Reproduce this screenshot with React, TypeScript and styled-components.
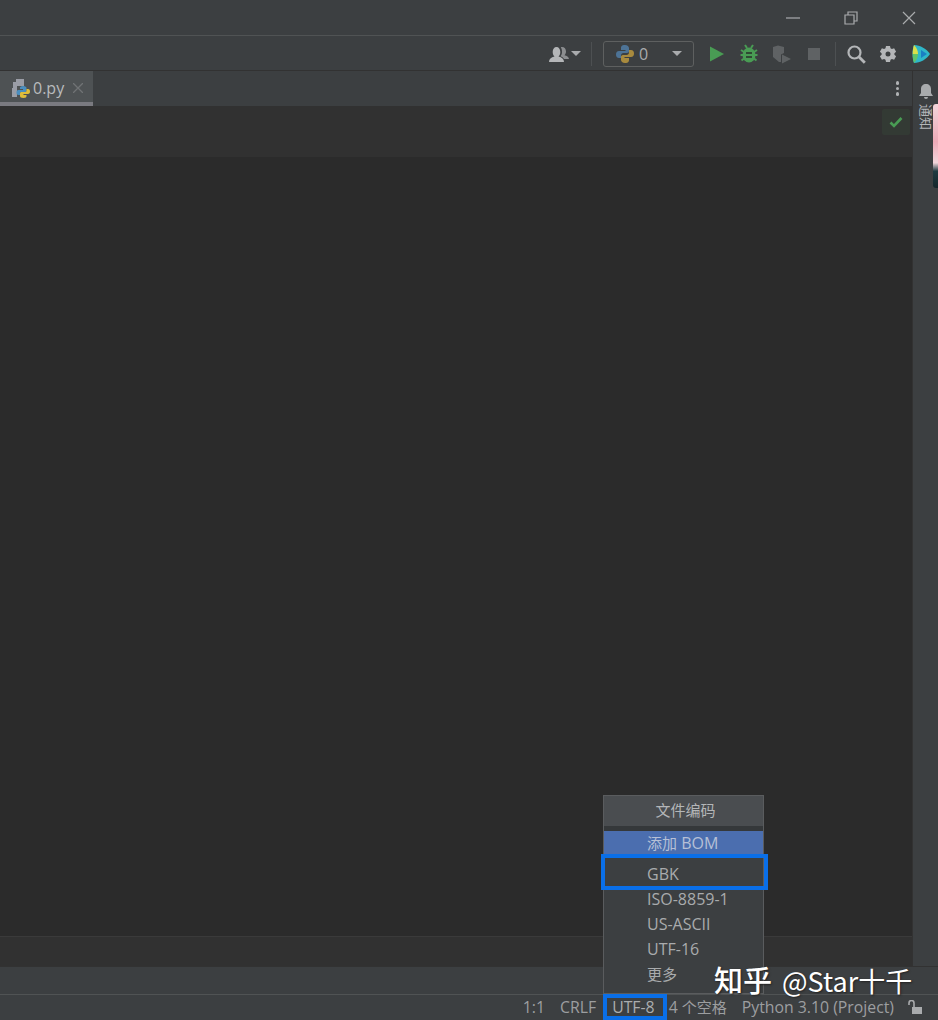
import React from 'react'
import styled, { createGlobalStyle } from 'styled-components'

const GlobalStyle = createGlobalStyle`
  html, body {
    margin: 0;
    padding: 0;
    background: #3c3f41;
  }
`

const Page = styled.div`
  position: relative;
  width: 938px;
  height: 1020px;
  overflow: hidden;
  display: flex;
  flex-direction: column;
  background: #3c3f41;
  color: #afb1b3;
  font-family: 'Open Sans', 'Noto Sans', 'Noto Sans CJK SC', sans-serif;
`

const TitleBar = styled.div`
  height: 36px;
  flex: none;
  display: flex;
  justify-content: flex-end;
  align-items: center;
  padding-right: 22px;
  gap: 44px;
  border-bottom: 1px solid #505354;
  box-sizing: border-box;
`

const WindowIcon = styled.svg`
  width: 14px;
  height: 14px;
  display: block;
  fill: none;
  stroke: #a9abad;
  stroke-width: 1.2;
`

const Toolbar = styled.div`
  height: 35px;
  flex: none;
  display: flex;
  justify-content: flex-end;
  align-items: center;
  padding: 1px 7px 0 0;
  border-bottom: 1px solid #323232;
  box-sizing: border-box;
`

const Divider = styled.div<{ $left: number; $right: number }>`
  width: 1px;
  height: 24px;
  background: #4d5052;
  margin: 0 ${({ $right }) => $right}px 0 ${({ $left }) => $left}px;
`

const ToolIcon = styled.svg<{ $ml?: number }>`
  width: 20px;
  height: 20px;
  display: block;
  margin-left: ${({ $ml }) => $ml ?? 0}px;
  flex: none;
`

const RunSelect = styled.div`
  width: 91px;
  height: 26px;
  border: 1px solid #5e6060;
  border-radius: 3px;
  box-sizing: border-box;
  display: flex;
  align-items: center;
  padding: 0 11px;
  margin-right: 13px;
  font-size: 16px;
  color: #a9abad;
`

const Zero = styled.span`
  margin-left: 4px;
  flex: 1;
`

const Caret = styled.span<{ $w: number; $ml?: number }>`
  width: 0;
  height: 0;
  margin-left: ${({ $ml }) => $ml ?? 0}px;
  border-left: ${({ $w }) => $w}px solid transparent;
  border-right: ${({ $w }) => $w}px solid transparent;
  border-top: ${({ $w }) => $w}px solid #a9abad;
`

const Main = styled.div`
  flex: 1;
  display: flex;
  min-height: 0;
`

const Center = styled.div`
  flex: 1;
  display: flex;
  flex-direction: column;
  min-width: 0;
  border-right: 1px solid #323232;
`

const RightBar = styled.div`
  width: 25px;
  flex: none;
  display: flex;
  flex-direction: column;
  align-items: flex-start;
  padding: 13px 0 0 6px;
  box-sizing: border-box;
  gap: 5px;
  background: #3c3f41;
`

const VerticalLabel = styled.span`
  writing-mode: vertical-rl;
  text-orientation: sideways;
  font-size: 13px;
  line-height: 14px;
  color: #b4b6b8;
  font-family: 'Noto Sans CJK SC', sans-serif;
`

const TabStrip = styled.div`
  height: 35px;
  flex: none;
  display: flex;
  justify-content: space-between;
  align-items: center;
  padding-right: 13px;
  background: #3c3f41;
  box-sizing: border-box;
`

const Tab = styled.div`
  width: 93px;
  height: 35px;
  box-sizing: border-box;
  background: #4e5254;
  border-bottom: 4px solid #7a7a80;
  display: flex;
  align-items: center;
  padding: 3px 0 0 11px;
  font-size: 16px;
  color: #b9bbbd;
`

const TabName = styled.span`
  margin-left: 2px;
`

const CloseMark = styled.svg`
  width: 10px;
  height: 10px;
  margin-left: 9px;
  stroke: #707375;
  stroke-width: 1.3;
`

const Dots = styled.div`
  display: flex;
  flex-direction: column;
  gap: 2px;
`

const Dot = styled.span`
  width: 3.5px;
  height: 3.5px;
  border-radius: 50%;
  background: #b0b2b4;
`

const EditorTop = styled.div`
  height: 51px;
  flex: none;
  background: #313131;
  display: flex;
  justify-content: flex-end;
  padding: 3px 2px 0 0;
  box-sizing: border-box;
`

const InspectBadge = styled.div`
  width: 28px;
  height: 26px;
  background: #333a34;
  border-radius: 2px;
  display: flex;
  align-items: center;
  justify-content: center;
`

const Editor = styled.div`
  flex: 1;
  background: #2b2b2b;
`

const EditorBottom = styled.div`
  height: 30px;
  flex: none;
  background: #313131;
  border-top: 1px solid #3a3a3a;
  box-sizing: border-box;
`

const ToolStrip = styled.div`
  height: 28px;
  flex: none;
  background: #3c3f41;
  border-top: 1px solid #323232;
  box-sizing: border-box;
`

const StatusBar = styled.div`
  height: 26px;
  flex: none;
  display: flex;
  justify-content: flex-end;
  align-items: center;
  padding: 0 16px 2px 0;
  border-top: 1px solid #505354;
  box-sizing: border-box;
  font-size: 15.8px;
  background: #3c3f41;
`

const StatusItem = styled.span<{ $mr: number; $light?: boolean }>`
  margin-right: ${({ $mr }) => $mr}px;
  color: ${({ $light }) => ($light ? '#abadaf' : '#9c9ea0')};
  white-space: nowrap;
`

const Cjk = styled.span`
  font-size: 15px;
  font-family: 'Noto Sans CJK SC', sans-serif;
`

const Popup = styled.div`
  position: absolute;
  left: 603px;
  top: 795px;
  width: 161px;
  height: 199px;
  box-sizing: border-box;
  background: #3c3f41;
  border: 1px solid #5a5c5e;
  font-size: 16px;
  color: #a9abad;
`

const PopupTitle = styled.div`
  height: 35px;
  box-sizing: border-box;
  background: #4a4d50;
  display: flex;
  align-items: center;
  justify-content: center;
  padding: 0 0 3px 4px;
  color: #b4b6b8;
  border-bottom: 5px solid #35383a;
`

const PopupRow = styled.div<{ $selected?: boolean; $h: number; $pt?: number }>`
  height: ${({ $h }) => $h}px;
  box-sizing: border-box;
  padding: ${({ $pt }) => $pt ?? 0}px 0 2px 43px;
  display: flex;
  align-items: center;
  white-space: pre;
  background: ${({ $selected }) => ($selected ? '#4b6eaf' : 'transparent')};
  color: ${({ $selected }) => ($selected ? '#b6c0d6' : '#a9abad')};
`

const Highlight = styled.div<{ $l: number; $t: number; $w: number; $h: number }>`
  position: absolute;
  left: ${({ $l }) => $l}px;
  top: ${({ $t }) => $t}px;
  width: ${({ $w }) => $w}px;
  height: ${({ $h }) => $h}px;
  box-sizing: border-box;
  border: 4px solid #0a6fe8;
`

const Watermark = styled.div`
  position: absolute;
  left: 714px;
  top: 965px;
  height: 28px;
  font-size: 27px;
  line-height: 28px;
  color: #fff;
  white-space: nowrap;
  text-shadow: 1px 1px 2px #222;
  font-family: 'Noto Sans CJK SC', sans-serif;
`

const WatermarkBrand = styled.span`
  font-size: 29px;
  line-height: 28px;
  font-weight: 500;
  margin-right: 10px;
`

const Avatar = styled.div`
  position: absolute;
  left: 933px;
  top: 104px;
  width: 5px;
  height: 84px;
  border-radius: 3px 0 0 3px;
  background: linear-gradient(#f3d5da 0%, #eeaab8 45%, #f2c7d0 62%, #f2d5da 70%, #1e3a40 80%, #16262b 100%);
`

const popupItems = ['ISO-8859-1', 'US-ASCII', 'UTF-16']

const PyLogo = () => (
  <ToolIcon viewBox="0 0 20 20">
    <path d="M10 1C6.500 1 6 2.500 6 4v2h4.500v1H4C2 7 1 8.500 1 10.500S2 14 4 14h2v-2.500C6 10 7 9 8.500 9h3.500C13.500 9 14 8 14 7V4c0-1.500-1.500-3-4-3z" fill="#4d7396" />
    <path d="M10 19c3.500 0 4-1.500 4-3v-2H9.500v-1H16c2 0 3-1.500 3-3.500S18 6 16 6h-2v2.500C14 10 13 11 11.500 11H8C6.500 11 6 12 6 13v3c0 1.500 1.500 3 4 3z" fill="#a88a3e" />
  </ToolIcon>
)

const PyFile = () => (
  <ToolIcon viewBox="0 0 20 20">
    <path d="M2 9V4h3V1h8v7H6v2H2z" fill="#9a9da6" />
    <path d="M1 10h5v9H1z" fill="#9a9da6" />
    <path d="M12 8c-2.500 0-3 1-3 2v1h3v1H7.500C6 12 5.500 13 5.500 14.500S6 17 7.500 17H9v-1.500c0-1 .7-1.500 1.700-1.500H14c1 0 1.500-.7 1.500-1.500V10c0-1-1-2-3.500-2z" fill="#4a8fc0" />
    <path d="M12.500 20c2.500 0 3-1 3-2v-1h-3v-1H17c1.500 0 2-1 2-2.500s-.5-2.500-2-2.500h-1.500v1.500c0 1-.7 1.500-1.700 1.500h-3.300c-1 0-1.500.7-1.500 1.500V18c0 1 1 2 3.500 2z" fill="#e0bd3a" />
  </ToolIcon>
)

export default function App() {
  return (
    <Page>
      <GlobalStyle />
      <TitleBar>
        <WindowIcon viewBox="0 0 14 14"><path d="M0 7h14" /></WindowIcon>
        <WindowIcon viewBox="0 0 14 14"><path d="M1 4h9v9H1zM4 4V1h9v9h-3" /></WindowIcon>
        <WindowIcon viewBox="0 0 14 14"><path d="M1 1l12 12M13 1L1 13" /></WindowIcon>
      </TitleBar>
      <Toolbar>
        <ToolIcon viewBox="0 0 20 20">
          <path d="M13 3c2.500 0 4 1.800 4 4.500 0 1.500-.6 2.800-1.500 3.700 2.500.6 4 1.600 4.500 3.800h-5c-.8-1.500-2-2.200-3.500-2.800 1-1 1.500-2.500 1.500-4.200 0-2-.4-3.700-1.200-4.800.3-.1.800-.2 1.200-.2z" fill="#8c8e90" />
          <path d="M0 18c0-3 2-4.500 5.500-5.500-1-1-1.800-2.500-1.800-4.500C3.700 5 5.200 3 7.500 3s3.800 2 3.800 5c0 2-.8 3.500-1.800 4.500 3.500 1 5.500 2.500 5.500 5.500z" fill="#b4b6b8" />
        </ToolIcon>
        <Caret $w={5} $ml={2} />
        <Divider $left={10} $right={11} />
        <RunSelect>
          <PyLogo />
          <Zero>0</Zero>
          <Caret $w={5.500} />
        </RunSelect>
        <ToolIcon viewBox="0 0 20 20">
          <path d="M3 2.500L17 10 3 17.500z" fill="#499c54" />
        </ToolIcon>
        <ToolIcon $ml={12} viewBox="0 0 20 20">
          <ellipse cx="10" cy="11" rx="6.500" ry="7.500" fill="#499c54" />
          <path d="M6 1l2 3M14 1l-2 3M1.500 11H4M16 11h2.500M2 6l3 2M18 6l-3 2M2.500 16.500l2.500-2M17.500 16.500l-2.500-2" stroke="#499c54" strokeWidth="2" />
          <path d="M7 9h6M7 13h6" stroke="#2f4a33" strokeWidth="1.800" />
        </ToolIcon>
        <ToolIcon $ml={13} viewBox="0 0 20 20">
          <path d="M1 3l5-1.500L12 3v6l-3 1.500V18H7l-6-5z" fill="#5f6264" />
          <path d="M10 10.500l9 4.500-9 4.500z" fill="#5f6264" />
        </ToolIcon>
        <ToolIcon $ml={12} viewBox="0 0 20 20">
          <rect x="4" y="4" width="12" height="12" fill="#5f6264" />
        </ToolIcon>
        <Divider $left={11} $right={10} />
        <ToolIcon viewBox="0 0 20 20" fill="none">
          <circle cx="8.500" cy="8.500" r="6" stroke="#b4b6b8" strokeWidth="2.200" />
          <path d="M12.800 12.800l6 6" stroke="#b4b6b8" strokeWidth="2.800" />
        </ToolIcon>
        <ToolIcon $ml={12} viewBox="0 0 20 20">
          <path fillRule="evenodd" d="M8 2h4l.5 2.300 1.400.8 2.200-.8 2 3.400-1.700 1.600v1.400l1.700 1.600-2 3.400-2.200-.8-1.400.8L12 18H8l-.5-2.300-1.400-.8-2.200.8-2-3.400 1.700-1.600V9.300L1.900 7.700l2-3.400 2.200.8 1.400-.8zM10 7.500a2.500 2.500 0 100 5 2.500 2.500 0 000-5z" fill="#b4b6b8" />
        </ToolIcon>
        <ToolIcon $ml={13} viewBox="0 0 20 20">
          <path d="M3 1c6 0 13 4 16 9-3 5-10 9-16 9-2-5-2-13 0-18z" fill="#2fb7c9" />
          <path d="M3 1c3 3 4 6 4 9H1.700C1.700 7 2 4 3 1z" fill="#d8e04a" />
          <path d="M7 10c0 3-1 6-4 9-1-3-1.300-6-1.300-9z" fill="#5fc46a" />
          <path d="M10 6l6 4-6 4z" fill="#1a7fc4" />
        </ToolIcon>
      </Toolbar>
      <Main>
        <Center>
          <TabStrip>
            <Tab>
              <PyFile />
              <TabName>0.py</TabName>
              <CloseMark viewBox="0 0 10 10"><path d="M0 0l10 10M10 0L0 10" /></CloseMark>
            </Tab>
            <Dots><Dot /><Dot /><Dot /></Dots>
          </TabStrip>
          <EditorTop>
            <InspectBadge>
              <svg width="14" height="12" viewBox="0 0 14 12" fill="none">
                <path d="M1.500 6.500l3.500 3.500 7.500-8" stroke="#499c54" strokeWidth="2.600" />
              </svg>
            </InspectBadge>
          </EditorTop>
          <Editor />
          <EditorBottom />
        </Center>
        <RightBar>
          <svg width="14" height="15" viewBox="0 0 14 15">
            <path d="M7 0c3 0 5 2 5 5v4l2 3H0l2-3V5c0-3 2-5 5-5zM5 13h4a2 2 0 01-4 0z" fill="#a9abad" />
          </svg>
          <VerticalLabel>通知</VerticalLabel>
        </RightBar>
      </Main>
      <ToolStrip />
      <StatusBar>
        <StatusItem $mr={15}>1:1</StatusItem>
        <StatusItem $mr={16}>CRLF</StatusItem>
        <StatusItem $mr={14} $light>UTF-8</StatusItem>
        <StatusItem $mr={15}>4 <Cjk>个空格</Cjk></StatusItem>
        <StatusItem $mr={14}>Python 3.10 (Project)</StatusItem>
        <svg width="14" height="14" viewBox="0 0 14 14" fill="none">
          <rect x="4" y="7" width="10" height="7" fill="#a9abad" />
          <path d="M1 5V3a2.500 2.500 0 015 0v4" stroke="#a9abad" strokeWidth="1.600" />
        </svg>
      </StatusBar>
      <Avatar />
      <Popup>
        <PopupTitle><Cjk>文件编码</Cjk></PopupTitle>
        <PopupRow $selected $h={25}><Cjk>添加</Cjk> BOM</PopupRow>
        <PopupRow $h={31} $pt={7}>GBK</PopupRow>
        {popupItems.map((item) => (
          <PopupRow key={item} $h={25}>{item}</PopupRow>
        ))}
        <PopupRow $h={25}><Cjk>更多</Cjk></PopupRow>
      </Popup>
      <Highlight $l={601} $t={854} $w={167} $h={36} />
      <Highlight $l={603} $t={994} $w={64} $h={26} />
      <Watermark><WatermarkBrand>知乎</WatermarkBrand>@Star十千</Watermark>
    </Page>
  )
}
